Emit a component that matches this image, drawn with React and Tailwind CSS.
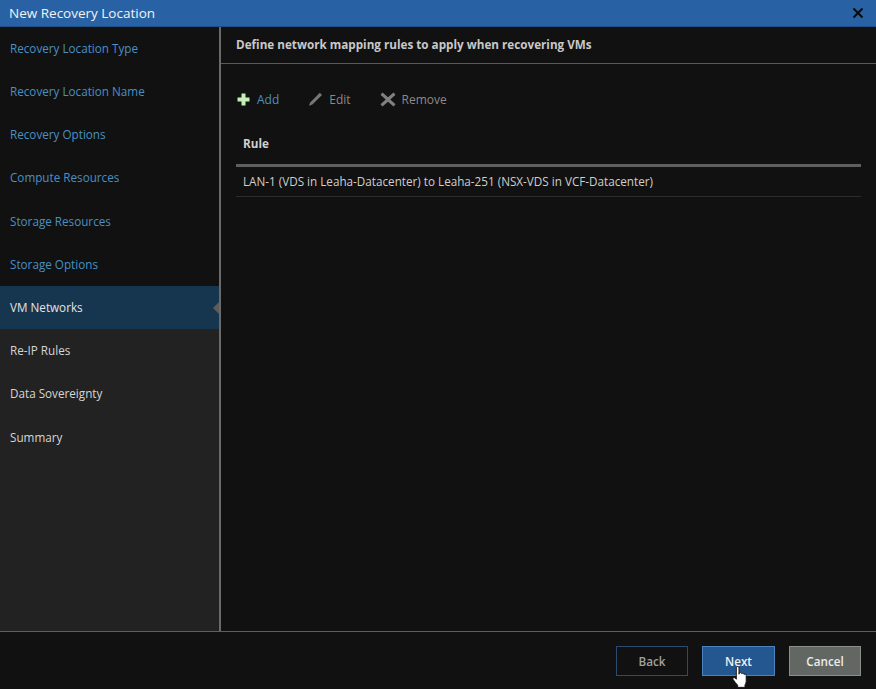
import React from 'react';

const steps = [
  { label: 'Recovery Location Type', state: 'done' },
  { label: 'Recovery Location Name', state: 'done' },
  { label: 'Recovery Options', state: 'done' },
  { label: 'Compute Resources', state: 'done' },
  { label: 'Storage Resources', state: 'done' },
  { label: 'Storage Options', state: 'done' },
  { label: 'VM Networks', state: 'active' },
  { label: 'Re-IP Rules', state: 'todo' },
  { label: 'Data Sovereignty', state: 'todo' },
  { label: 'Summary', state: 'todo' },
];

const StepItem = ({ label, state }) => {
  if (state === 'active') {
    return (
      <div className="relative h-[43.2px] flex items-center pl-[10px] bg-[#16354f] text-[#e4e4e4]">
        {label}
        {/* little notch pointing at the content pane */}
        <div className="absolute right-0 top-[16px] w-0 h-0 border-y-[6px] border-y-transparent border-r-[6px] border-r-[#5c5c5c]" />
      </div>
    );
  }
  return (
    <div className={`h-[43.2px] flex items-center pl-[10px] ${state === 'done' ? 'text-[#4a90c4]' : 'text-[#d6d6d6]'}`}>
      {label}
    </div>
  );
};

const PlusIcon = () => (
  <svg width="13" height="13" viewBox="0 0 13 13">
    <path d="M4.500 0.500h4v4h4v4h-4v4h-4v-4h-4v-4h4z" fill="#c4f0b8" />
  </svg>
);

const PencilIcon = () => (
  <svg width="15" height="15" viewBox="0 0 15 15">
    <path d="M11.800 0.800l2.200 2.200-9.600 9.600-3.400 1.200 1.200-3.400z" fill="#777777" />
  </svg>
);

const CrossIcon = () => (
  <svg width="16" height="15" viewBox="0 0 16 15">
    <path d="M2.500 0.500l5.500 4.700 5.500-4.700 2 2.200-5.200 4.800 5.200 4.800-2 2.200-5.500-4.700-5.500 4.700-2-2.200 5.200-4.800-5.200-4.800z" fill="#808080" />
  </svg>
);

const HandCursor = () => (
  <svg width="19" height="23" viewBox="0 0 16 21" preserveAspectRatio="none" className="absolute left-[28px] top-[19px]">
    <path
      d="M4.500 1.500c0-1.300 2.200-1.300 2.200 0v6l0.300-1.200c0.900-0.500 1.900-0.300 2 0.600 0.700-0.500 1.800-0.300 1.900 0.700 0.800-0.400 1.900 0 1.900 1v5.400c0 1.300-0.400 2.200-1 3.200v2.300H5.600v-2c-1.200-1.300-2.500-3.200-3.800-5.200-0.800-1.200 0.800-2.300 1.800-1.200l0.900 1z"
      fill="#ffffff"
      stroke="#111111"
      strokeWidth="0.8"
    />
  </svg>
);

export default function App() {
  return (
    <div className="w-[876px] h-[689px] flex flex-col bg-[#111111] overflow-hidden text-[11.7px] font-['Open_Sans',sans-serif]">
      {/* Title bar */}
      <div className="h-[27px] shrink-0 flex items-center justify-between pl-[9px] pr-[12px] bg-[#2862a4] border-b border-[#214f85] text-[13.5px] text-[#f2f2f2]">
        <span>New Recovery Location</span>
        <svg width="12" height="12" viewBox="0 0 12 12">
          <path d="M1.500 1.500l9 9M10.500 1.500l-9 9" stroke="#0a0a0a" strokeWidth="2" />
        </svg>
      </div>

      <div className="flex-1 flex min-h-0">
        {/* Wizard steps */}
        <div className="w-[221px] shrink-0 flex flex-col border-r-2 border-[#6a6a6a] bg-[#222222]">
          <div className="bg-[#111111]">
            {steps.filter((s) => s.state === 'done').map((s) => (
              <StepItem key={s.label} {...s} />
            ))}
          </div>
          {steps.filter((s) => s.state !== 'done').map((s) => (
            <StepItem key={s.label} {...s} />
          ))}
        </div>

        {/* Content */}
        <div className="flex-1 flex flex-col min-w-0">
          <div className="h-[37px] shrink-0 flex items-center pl-[15px] border-b border-[#5a5a5a] font-bold text-[#c8c8c8]">
            Define network mapping rules to apply when recovering VMs
          </div>
          <div className="h-[71px] shrink-0 flex items-center pl-[16px] text-[12px]">
            <div className="flex items-center gap-[7px] text-[#4a90c4]">
              <PlusIcon />
              Add
            </div>
            <div className="flex items-center gap-[6px] ml-[29px] text-[#8a8a8a]">
              <PencilIcon />
              Edit
            </div>
            <div className="flex items-center gap-[6px] ml-[29px] text-[#8a8a8a]">
              <CrossIcon />
              Remove
            </div>
          </div>
          <div className="mx-[15px]">
            <div className="h-[32px] flex items-start pl-[7px] border-b-[3px] border-[#5f5f5f] font-bold text-[#d0d0d0]">
              Rule
            </div>
            <div className="h-[30px] flex items-center pl-[7px] border-b border-[#2c2c2c] text-[#cfcfcf]">
              LAN-1 (VDS in Leaha-Datacenter) to Leaha-251 (NSX-VDS in VCF-Datacenter)
            </div>
          </div>
        </div>
      </div>

      {/* Footer */}
      <div className="h-[58px] shrink-0 flex items-start justify-end gap-[14px] pt-[14px] pr-[15px] border-t border-[#5f5f5f]">
        <button className="w-[72px] h-[30px] pt-[1px] border border-[#2c4a70] text-[#a0a0a0] font-semibold">Back</button>
        <button className="relative w-[73px] h-[30px] pt-[1px] border border-[#4a83bd] bg-[#24568f] text-[#f0f0f0] font-semibold">
          Next
          <HandCursor />
        </button>
        <button className="w-[72px] h-[30px] pt-[1px] border border-[#8a8f8a] bg-[#636763] text-[#ececec] font-semibold">Cancel</button>
      </div>
    </div>
  );
}
